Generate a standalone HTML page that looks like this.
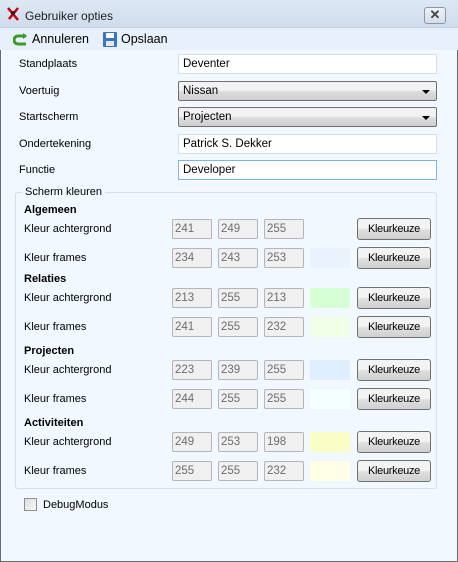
<!DOCTYPE html><html><head><style>
*{box-sizing:border-box;margin:0;padding:0}
body{width:458px;height:562px;overflow:hidden;background:#fff;font-family:"Liberation Sans",sans-serif;font-size:11px;color:#000;position:relative}
.a{position:absolute;white-space:nowrap}
.win{position:absolute;left:0;top:0;width:458px;height:562px;border:1px solid #6b6b6b;border-top:none;background:#f1f8ff}
.title{position:absolute;left:0;top:0;width:458px;height:28px;background:linear-gradient(#dde8f4,#cfdcec);border-bottom:1px solid #c4d3e5}
.tb{position:absolute;left:0;top:28px;width:458px;height:22px;background:#e8f1fb}
.inp{position:absolute;left:178px;width:259px;height:20px;background:#fff;border:1px solid #d6dde5;padding:3px 4px;font-size:11.5px}
.cmb{position:absolute;left:178px;width:259px;height:20px;border:1px solid #707070;border-radius:2px;background:linear-gradient(#f2f2f2 45%,#dcdcdc 55%,#cfcfcf);padding:3px 4px;font-size:11.5px}
.cmb:after{content:"";position:absolute;right:6px;top:8px;border-left:4px solid transparent;border-right:4px solid transparent;border-top:4px solid #000}
.num{position:absolute;width:40px;height:20px;border:1px solid #b5b5b5;border-radius:2px;background:#f0f0f0;color:#6d6d6d;padding:3px 2px;font-size:11.5px}
.sw{position:absolute;left:310px;width:40px;height:20px}
.btn{position:absolute;left:357px;width:74px;height:22px;border:1px solid #707070;border-radius:3px;background:linear-gradient(#f3f3f3 45%,#dedede 55%,#d0d0d0);text-align:center;line-height:20px;letter-spacing:-0.3px}
.h{font-weight:bold;position:absolute;left:24px}
</style></head><body>
<div class="win"></div>
<div class="title"></div>
<div class="a" style="left:6px;top:6px;width:14px;height:16px"><svg width="14" height="16"><path d="M2 2 L12 14 M12 2 L3 13" stroke="#c00" stroke-width="2.5"/><circle cx="7" cy="7" r="2" fill="#222"/></svg></div>
<div class="a" style="left:25px;top:9px;font-size:12px;color:#222">Gebruiker opties</div>
<div class="a" style="left:424px;top:7px;width:22px;height:17px;border:1px solid #8a97a8;border-radius:3px;background:linear-gradient(#eef3f9,#d4dde8);text-align:center;font-size:13px;line-height:14px;color:#444;font-weight:bold">✕</div>
<div class="tb"></div>
<div class="a" style="left:13px;top:32px"><svg width="16" height="16"><path d="M13 4 H5 A4 4 0 0 0 5 12 H13" stroke="#3a9a2a" stroke-width="3" fill="none"/><path d="M10 1 L14 4 L10 7Z" fill="#3a9a2a"/></svg></div>
<div class="a" style="left:32px;top:32px;font-size:12.5px">Annuleren</div>
<div class="a" style="left:102px;top:31px"><svg width="16" height="17"><rect x="1" y="1" width="14" height="15" rx="1" fill="#3b74c4"/><rect x="4" y="2" width="8" height="5" fill="#fff"/><rect x="4" y="10" width="8" height="5" fill="#dfe9f5"/></svg></div>
<div class="a" style="left:121px;top:32px;font-size:12.5px">Opslaan</div>

<div class="a" style="left:19px;top:58px">Standplaats</div>
<div class="a" style="left:19px;top:85px">Voertuig</div>
<div class="a" style="left:19px;top:111px">Startscherm</div>
<div class="a" style="left:19px;top:138px">Ondertekening</div>
<div class="a" style="left:19px;top:164px">Functie</div>
<div class="inp" style="top:54px">Deventer</div>
<div class="cmb" style="top:81px">Nissan</div>
<div class="cmb" style="top:107px">Projecten</div>
<div class="inp" style="top:134px">Patrick S. Dekker</div>
<div class="inp" style="top:160px;border-color:#7eb4ea">Developer</div>

<div class="a" style="left:15px;top:192px;width:422px;height:297px;border:1px solid #d5dfe5;border-radius:3px"></div>
<div class="a" style="left:22px;top:186px;background:#f1f8ff;padding:0 3px">Scherm kleuren</div>

<div class="h" style="top:204px">Algemeen</div>
<div class="h" style="top:273px">Relaties</div>
<div class="h" style="top:345px">Projecten</div>
<div class="h" style="top:417px">Activiteiten</div>

<div class="a" style="left:24px;top:223px">Kleur achtergrond</div>
<div class="a" style="left:24px;top:252px">Kleur frames</div>
<div class="a" style="left:24px;top:292px">Kleur achtergrond</div>
<div class="a" style="left:24px;top:321px">Kleur frames</div>
<div class="a" style="left:24px;top:364px">Kleur achtergrond</div>
<div class="a" style="left:24px;top:393px">Kleur frames</div>
<div class="a" style="left:24px;top:436px">Kleur achtergrond</div>
<div class="a" style="left:24px;top:465px">Kleur frames</div>

<div class="num" style="left:172px;top:219px">241</div><div class="num" style="left:218px;top:219px">249</div><div class="num" style="left:264px;top:219px">255</div>
<div class="sw" style="top:219px;background:#f1f9ff"></div><div class="btn" style="top:218px">Kleurkeuze</div>
<div class="num" style="left:172px;top:248px">234</div><div class="num" style="left:218px;top:248px">243</div><div class="num" style="left:264px;top:248px">253</div>
<div class="sw" style="top:248px;background:#eaf3fd"></div><div class="btn" style="top:247px">Kleurkeuze</div>

<div class="num" style="left:172px;top:288px">213</div><div class="num" style="left:218px;top:288px">255</div><div class="num" style="left:264px;top:288px">213</div>
<div class="sw" style="top:288px;background:#d5ffd5"></div><div class="btn" style="top:287px">Kleurkeuze</div>
<div class="num" style="left:172px;top:317px">241</div><div class="num" style="left:218px;top:317px">255</div><div class="num" style="left:264px;top:317px">232</div>
<div class="sw" style="top:317px;background:#f1ffe8"></div><div class="btn" style="top:316px">Kleurkeuze</div>

<div class="num" style="left:172px;top:360px">223</div><div class="num" style="left:218px;top:360px">239</div><div class="num" style="left:264px;top:360px">255</div>
<div class="sw" style="top:360px;background:#dfefff"></div><div class="btn" style="top:359px">Kleurkeuze</div>
<div class="num" style="left:172px;top:389px">244</div><div class="num" style="left:218px;top:389px">255</div><div class="num" style="left:264px;top:389px">255</div>
<div class="sw" style="top:389px;background:#f4ffff"></div><div class="btn" style="top:388px">Kleurkeuze</div>

<div class="num" style="left:172px;top:432px">249</div><div class="num" style="left:218px;top:432px">253</div><div class="num" style="left:264px;top:432px">198</div>
<div class="sw" style="top:432px;background:#f9fdc6"></div><div class="btn" style="top:431px">Kleurkeuze</div>
<div class="num" style="left:172px;top:461px">255</div><div class="num" style="left:218px;top:461px">255</div><div class="num" style="left:264px;top:461px">232</div>
<div class="sw" style="top:461px;background:#ffffe8"></div><div class="btn" style="top:460px">Kleurkeuze</div>

<div class="a" style="left:24px;top:498px;width:13px;height:13px;border:1px solid #8f8f8f;background:linear-gradient(135deg,#dcdcdc,#f8f8f8)"></div>
<div class="a" style="left:43px;top:499px">DebugModus</div>
</body></html>
